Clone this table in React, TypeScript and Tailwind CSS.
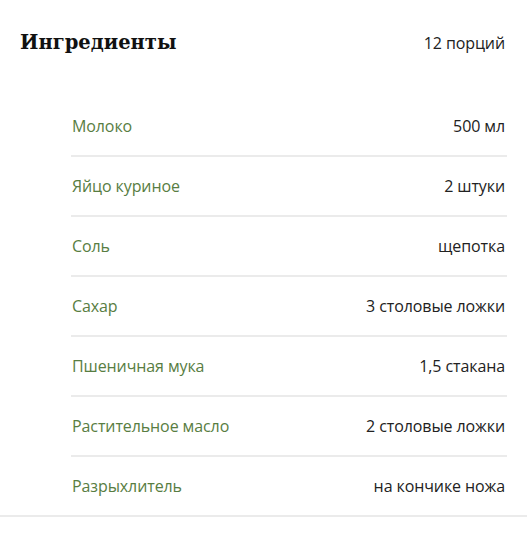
import React from "react";

const items: [string, string][] = [
  ["Молоко", "500 мл"],
  ["Яйцо куриное", "2 штуки"],
  ["Соль", "щепотка"],
  ["Сахар", "3 столовые ложки"],
  ["Пшеничная мука", "1,5 стакана"],
  ["Растительное масло", "2 столовые ложки"],
  ["Разрыхлитель", "на кончике ножа"],
];

export default function App() {
  return (
    <div className="w-[527px] h-[550px] bg-white tracking-[-0.1px]" style={{ fontFamily: "'Open Sans', 'Noto Sans', sans-serif" }}>
      <div className="h-[86px] flex items-center justify-between pl-5 pr-[22px]">
        <h2 className="text-[19.5px] font-bold text-[#111] tracking-normal" style={{ fontFamily: "'DejaVu Serif', serif" }}>
          Ингредиенты
        </h2>
        <span className="text-[16px] text-[#222]">12 порций</span>
      </div>
      <div className="mt-[11px] border-b-2 border-[#ebebeb]">
        {items.map(([name, qty], i) => (
          <div key={name} className="pl-[71px] pr-[20px]">
            <div
              className={
                "flex items-center justify-between pr-[2px] " +
                (i < items.length - 1 ? "border-b-2 border-[#ebebeb] h-[60px]" : "h-[58px]")
              }
            >
              <span className="text-[16px] text-[#587d42] pl-[1px]">{name}</span>
              <span className="text-[16px] text-[#222]">{qty}</span>
            </div>
          </div>
        ))}
      </div>
    </div>
  );
}
